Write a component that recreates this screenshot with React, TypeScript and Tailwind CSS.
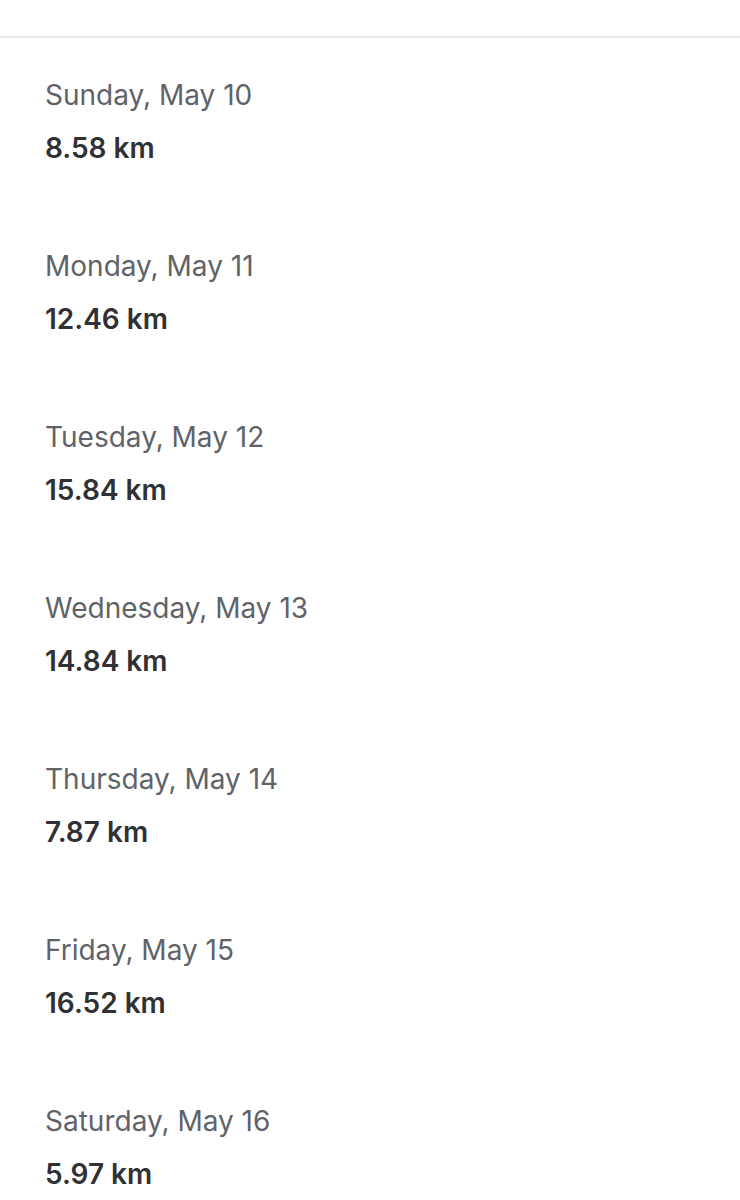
import React from "react";

const rows = [
  ["Sunday, May 10", "8.58 km"],
  ["Monday, May 11", "12.46 km"],
  ["Tuesday, May 12", "15.84 km"],
  ["Wednesday, May 13", "14.84 km"],
  ["Thursday, May 14", "7.87 km"],
  ["Friday, May 15", "16.52 km"],
  ["Saturday, May 16", "5.97 km"],
];

export default function App() {
  return (
    <div className="w-[740px] h-[1200px] bg-white overflow-hidden" style={{ fontFamily: "Inter, 'Noto Sans', sans-serif" }}>
      <div className="h-[36px]" />
      <div className="h-[2px] bg-[#e8e8e8]" />
      <div className="flex flex-col pl-[45px] pt-[40px]">
        {rows.map(([d, k]) => (
          <div key={d} className="h-[171px] flex flex-col">
            <div className="text-[28px] leading-[34px] text-[#5f6368]">{d}</div>
            <div className="mt-[19px] text-[28px] leading-[34px] font-semibold text-[#303134]">{k}</div>
          </div>
        ))}
      </div>
    </div>
  );
}
